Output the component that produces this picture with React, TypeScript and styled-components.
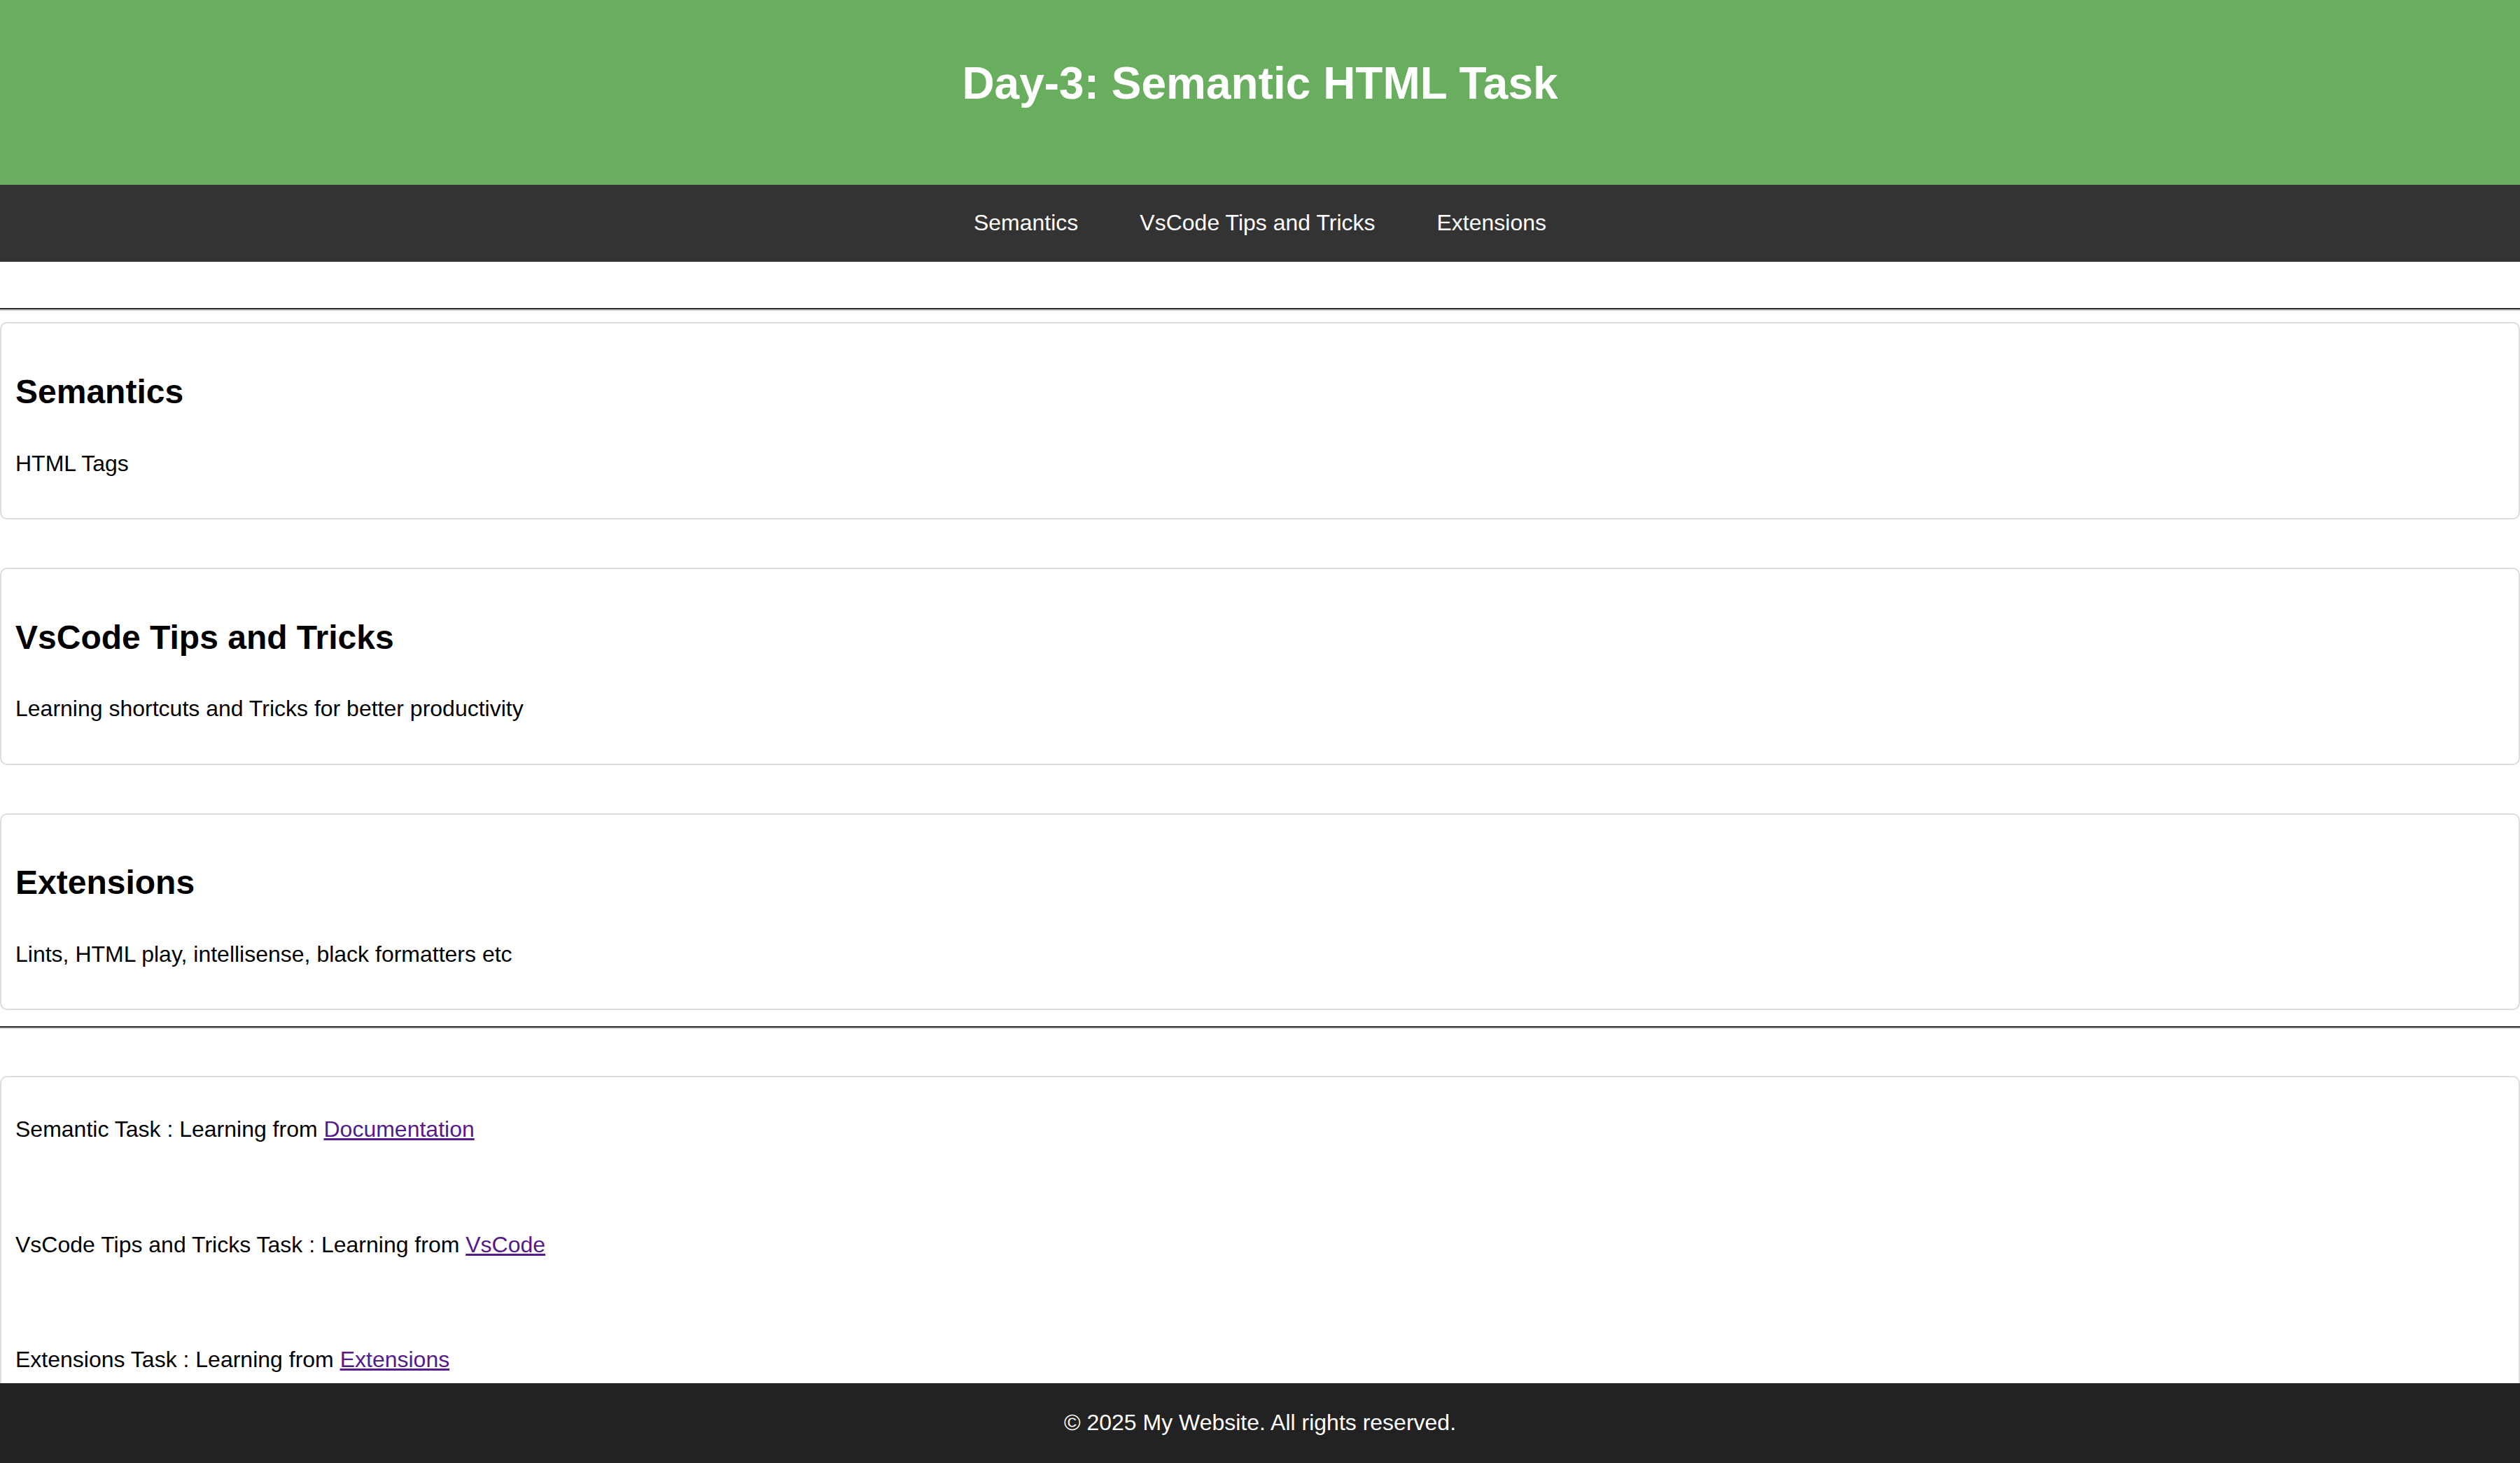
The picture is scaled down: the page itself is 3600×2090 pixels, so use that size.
import React from "react";
import styled, { createGlobalStyle } from "styled-components";

const GlobalStyle = createGlobalStyle`
  html, body {
    margin: 0;
    padding: 0;
    background: #ffffff;
  }
  body {
    font-family: "Liberation Sans", Arial, Helvetica, sans-serif;
    font-size: 32px;
    line-height: 1.6;
    color: #000000;
  }
  * { box-sizing: border-box; }
`;

const Header = styled.header`
  background: #69ae5f;
  color: #ffffff;
  text-align: center;
  padding: 68px 0 93.6px;
`;

const Title = styled.h1`
  margin: 0;
  font-size: 64px;
  font-weight: 700;
  line-height: 102.4px;
`;

const Nav = styled.nav`
  background: #333333;
  padding: 29.4px 0;
  display: flex;
  justify-content: center;
  gap: 88px;
`;

const NavLink = styled.a`
  color: #ffffff;
  text-decoration: none;
  font-size: 32px;
  line-height: 51.2px;
`;

const Main = styled.main`
  padding-top: 66px;
`;

const Rule = styled.hr`
  margin: 0;
  height: 0;
  border: none;
  border-top: 2px solid #2b2b2b;
  border-bottom: 2px solid #d2d2d2;
`;

const TopicList = styled.div`
  display: flex;
  flex-direction: column;
  gap: 69px;
  margin: 16px 0 23px;
`;

const Card = styled.section<{ $offset?: number }>`
  border: 2px solid #dddddd;
  border-radius: 10px;
  padding: 20px 20px;
  background: #ffffff;
  margin-top: ${(p) => (p.$offset ? `${p.$offset}px` : "0")};
`;

const CardTitle = styled.h2`
  margin: 39.8px 0 38px;
  font-size: 48px;
  font-weight: 700;
  line-height: 76.8px;
`;

const CardText = styled.p`
  margin: 0 0 32px;
  font-size: 32px;
  line-height: 51.2px;
`;

const TaskLine = styled.p`
  margin: 29px 0;
  font-size: 32px;
  line-height: 51.2px;
  & + & {
    margin-top: 113px;
  }
`;

const TaskLink = styled.a`
  color: #551a8b;
  text-decoration: underline;
`;

const Footer = styled.footer`
  position: fixed;
  left: 0;
  right: 0;
  bottom: 0;
  background: #222222;
  color: #ffffff;
  text-align: center;
  padding: 31.4px 0;
  font-size: 32px;
  line-height: 51.2px;
`;

const topics = [
  { id: "semantics", title: "Semantics", text: "HTML Tags" },
  {
    id: "vscode",
    title: "VsCode Tips and Tricks",
    text: "Learning shortcuts and Tricks for better productivity",
  },
  {
    id: "extensions",
    title: "Extensions",
    text: "Lints, HTML play, intellisense, black formatters etc",
  },
];

const tasks = [
  { label: "Semantic Task : Learning from ", link: "Documentation" },
  { label: "VsCode Tips and Tricks Task : Learning from ", link: "VsCode" },
  { label: "Extensions Task : Learning from ", link: "Extensions" },
];

export default function App() {
  return (
    <>
      <GlobalStyle />
      <Header>
        <Title>Day-3: Semantic HTML Task</Title>
      </Header>
      <Nav>
        <NavLink href="#semantics">Semantics</NavLink>
        <NavLink href="#vscode">VsCode Tips and Tricks</NavLink>
        <NavLink href="#extensions">Extensions</NavLink>
      </Nav>
      <Main>
        <Rule />
        <TopicList>
          {topics.map((t) => (
            <Card key={t.id} id={t.id}>
              <CardTitle>{t.title}</CardTitle>
              <CardText>{t.text}</CardText>
            </Card>
          ))}
        </TopicList>
        <Rule />
        <Card as="aside" $offset={67}>
          {tasks.map((t) => (
            <TaskLine key={t.link}>
              {t.label}
              <TaskLink href="#">{t.link}</TaskLink>
            </TaskLine>
          ))}
        </Card>
      </Main>
      <Footer>© 2025 My Website. All rights reserved.</Footer>
    </>
  );
}
